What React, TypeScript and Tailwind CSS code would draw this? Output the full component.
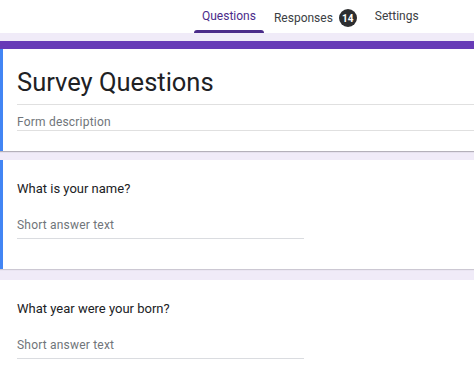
const questions = [
  { title: "What is your name?", active: true },
  { title: "What year were your born?", active: false },
];

const QuestionCard = ({ title, active }: { title: string; active: boolean }) => (
  <div
    className={`flex bg-white ${active ? "h-[109px] shadow-[0_1px_1px_rgba(0,0,0,0.15)]" : "h-[104px]"}`}
  >
    <div className={`w-[3px] ${active ? "bg-[#4285f4]" : "bg-white"}`} />
    <div className="flex flex-col pl-[14px] pt-[19px]">
      <div className="text-[13px] leading-5 text-[#202124]">{title}</div>
      <div className="mt-[16px] w-[287px] border-b border-[#dadce0] pb-[3px] text-[12px] leading-5 tracking-[0.2px] text-[#70757a]">
        Short answer text
      </div>
    </div>
  </div>
);

export default function App() {
  return (
    <div className="h-[384px] w-[474px] overflow-hidden bg-[#f0ebf8] font-['Roboto',sans-serif]">
      <div className="flex h-[33px] items-end bg-white pl-[194px] text-[12px] text-[#3c4043]">
        <div className="flex h-full flex-col justify-end">
          <div className="px-[8px] pb-[5px] text-[#4b2b8a]">Questions</div>
          <div className="h-[3px] rounded-t bg-[#4b2b8a]" />
        </div>
        <div className="ml-[10px] flex items-center gap-[6px] pb-[6px]">
          Responses
          <span className="flex h-[18px] w-[18px] items-center justify-center rounded-full bg-[#2d2e30] text-[10px] font-bold text-white">
            14
          </span>
        </div>
        <div className="ml-[18px] pb-[8px]">Settings</div>
      </div>

      <div className="pt-[8px]">
        <div className="h-[8px] bg-[#673ab7]" />
        <div className="flex h-[102px] bg-white shadow-[0_1px_1px_rgba(0,0,0,0.25)]">
          <div className="w-[3px] bg-[#4285f4]" />
          <div className="flex flex-1 flex-col pl-[14px] pt-[17px]">
            <div className="border-b border-[#e0e0e0] pb-[6px] text-[25.5px] leading-8 text-[#202124]">
              Survey Questions
            </div>
            <div className="border-b border-[#e0e0e0] pb-[1px] pt-[10px] text-[12px] leading-[14px] tracking-[0.2px] text-[#70757a]">
              Form description
            </div>
          </div>
        </div>
      </div>

      <div className="mt-[9px] flex flex-col gap-[11px]">
        {questions.map((q) => (
          <QuestionCard key={q.title} title={q.title} active={q.active} />
        ))}
      </div>
    </div>
  );
}
